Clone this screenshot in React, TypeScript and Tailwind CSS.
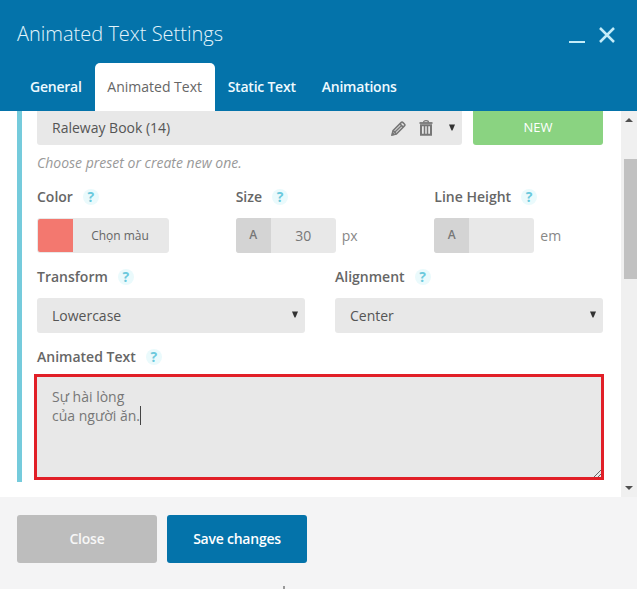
import React from 'react';

const TABS = ['General', 'Animated Text', 'Static Text', 'Animations'];
const ACTIVE_TAB = 'Animated Text';

const FieldLabel: React.FC<{ text: string }> = ({ text }) => (
  <div className="flex items-center h-[26px] gap-[10px]">
    <span className="text-sm font-semibold text-[#666]">{text}</span>
    <span className="w-4 h-4 rounded-full bg-[#eafafc] text-[#6cc9dc] text-sm leading-4 font-bold text-center">?</span>
  </div>
);

const Caret: React.FC = () => (
  <svg width="6" height="7" viewBox="0 0 6 7" className="shrink-0 -mt-[2px]">
    <path d="M0 0.5h6L3.5 6.5h-1z" fill="#333" />
  </svg>
);

const SelectField: React.FC<{ label: string; value: string }> = ({ label, value }) => (
  <div>
    <FieldLabel text={label} />
    <div className="mt-2 h-[35px] rounded-[3px] bg-[#e8e8e8] flex items-center justify-between pl-[15px] pr-[7px]">
      <span className="text-sm text-[#555]">{value}</span>
      <Caret />
    </div>
  </div>
);

interface UnitFieldProps {
  label: string;
  value: string;
  unit: string;
}

const UnitField: React.FC<UnitFieldProps> = ({ label, value, unit }) => (
  <div>
    <FieldLabel text={label} />
    <div className="mt-2 flex items-center">
      <div className="flex w-[100px] h-[35px] rounded-[3px] overflow-hidden bg-[#e8e8e8]">
        <span className="w-[35px] bg-[#d4d4d4] text-[#777] text-xs font-semibold leading-[34px] text-center">A</span>
        <span className="flex-1 text-sm leading-[36px] text-[#777] text-center">{value}</span>
      </div>
      <span className="ml-[6px] text-sm text-[#888]">{unit}</span>
    </div>
  </div>
);

const PencilIcon: React.FC = () => (
  <svg width="15" height="15" viewBox="0 0 14 14" fill="none" stroke="#777">
    <path d="M1 13l.9-4L9.4 1.5q.9-.9 1.8 0l1.3 1.3q.9.9 0 1.8L5 12.1z" strokeWidth="1.5" />
    <path d="M8.3 2.6l3.1 3.1M3.7 10.3l5.7-5.7M2 9l3 3" strokeWidth="1.4" />
    <path d="M1 13l.5-2.1 1.6 1.6z" fill="#777" />
  </svg>
);

const TrashIcon: React.FC = () => (
  <svg width="14" height="16" viewBox="0 0 14 16" fill="none" stroke="#777">
    <path d="M4.5 2.5q0-1.8 2.5-1.8t2.5 1.8" strokeWidth="1.2" />
    <path d="M.5 3h13" strokeWidth="1.8" />
    <path d="M2 5.2h10v9.6H2z" strokeWidth="2" />
    <path d="M5.5 5.5v9M8.5 5.5v9" strokeWidth="1.5" />
  </svg>
);

const Header: React.FC = () => (
  <header className="h-[111px] shrink-0 bg-[#0473aa] flex flex-col justify-between">
    <div className="flex justify-between pl-[17px] pr-[22px]">
      <h1 className="mt-[19px] text-xl leading-[30px] font-light text-[#e3f5fc]">Animated Text Settings</h1>
      <div className="flex items-end gap-[14px] pb-[6px]">
        <span className="w-4 h-[2px] bg-[#c4ecf8]" />
        <svg width="16" height="16" viewBox="0 0 16 16" stroke="#c4ecf8" strokeWidth="2.5">
          <path d="M1 1l14 14M15 1L1 15" />
        </svg>
      </div>
    </div>
    <nav className="flex pl-[17px] h-12">
      {TABS.map(tab => (
        <span
          key={tab}
          className={
            tab === ACTIVE_TAB
              ? 'w-[120px] text-center text-sm leading-[48px] rounded-t-[5px] bg-white text-[#666]'
              : 'px-[13px] text-sm leading-[48px] font-semibold tracking-[-0.23px] text-[#eefaff]'
          }
        >
          {tab}
        </span>
      ))}
    </nav>
  </header>
);

const Scrollbar: React.FC = () => (
  <div className="w-4 shrink-0 bg-[#f0f0f0] flex flex-col items-center">
    <svg width="8" height="4" viewBox="0 0 8 4" className="mt-[7px] shrink-0">
      <path d="M0 4l4-4 4 4z" fill="#505050" />
    </svg>
    <div className="mt-[37px] ml-[2px] w-[13px] h-[120px] bg-[#c1c1c1]" />
    <svg width="8" height="4" viewBox="0 0 8 4" className="mt-auto mb-[7px] shrink-0">
      <path d="M0 0h8L4 4z" fill="#505050" />
    </svg>
  </div>
);

export default function App() {
  return (
    <div className="w-[637px] h-[589px] flex flex-col overflow-hidden bg-white font-['Open_Sans',sans-serif]">
      <Header />

      <div className="flex h-[386px] shrink-0">
        <main className="ml-[17px] w-[604px] h-[371px] border-l-[5px] border-[#75cbdc] pl-[15px] pr-[18px]">
          <div className="flex gap-[11px] h-[34px]">
            <div className="flex-1 rounded-b-[3px] bg-[#e8e8e8] flex items-center pl-[15px] pr-[7px]">
              <span className="flex-1 text-sm text-[#555]">Raleway Book (14)</span>
              <PencilIcon />
              <span className="ml-[13px] mr-[16px]"><TrashIcon /></span>
              <Caret />
            </div>
            <button className="w-[130px] rounded-b-[3px] bg-[#8ad381] text-white text-[13px]">NEW</button>
          </div>
          <p className="mt-[7px] text-sm leading-[22px] italic text-[#999]">Choose preset or create new one.</p>

          <div className="mt-[10px] grid grid-cols-3 gap-x-[30px]">
            <div>
              <FieldLabel text="Color" />
              <div className="mt-2 flex w-[132px] h-[35px] rounded-[3px] overflow-hidden border border-[#e8e8e8] bg-[#e8e8e8]">
                <span className="w-[35px] bg-[#f3786f]" />
                <span className="flex-1 pr-px text-xs leading-[34px] text-[#666] text-center">Chọn màu</span>
              </div>
            </div>
            <UnitField label="Size" value="30" unit="px" />
            <UnitField label="Line Height" value="" unit="em" />
          </div>

          <div className="mt-[11px] grid grid-cols-2 gap-x-[30px]">
            <SelectField label="Transform" value="Lowercase" />
            <SelectField label="Alignment" value="Center" />
          </div>

          <div className="mt-[11px]">
            <FieldLabel text="Animated Text" />
            <div className="mt-1 -ml-[3px] w-[570px] h-[106px] border-[3px] border-[#e11f27] bg-[#e8e8e8] pl-[15px] pt-[10px] flex justify-between">
              <div className="text-sm leading-[19px] text-[#777]">
                <p>Sự hài lòng</p>
                <p className="flex">
                  của người ăn.<span className="w-px h-[19px] bg-[#444]" />
                </p>
              </div>
              <svg width="8" height="8" viewBox="0 0 8 8" className="self-end" stroke="#555" strokeWidth="0.9">
                <path d="M1 8l7-7M5 8l3-3" />
              </svg>
            </div>
          </div>
        </main>
        <Scrollbar />
      </div>

      <footer className="relative flex-1 flex gap-[10px] pl-[17px] pt-[18px] bg-[#f4f4f5]">
        <button className="w-[140px] h-12 rounded-[3px] bg-[#bdbdbd] text-[#f7f7f7] text-sm font-semibold tracking-[-0.23px]">Close</button>
        <button className="w-[140px] h-12 rounded-[3px] bg-[#0473aa] text-white text-sm font-semibold tracking-[-0.23px]">Save changes</button>
        <span className="absolute left-[283px] bottom-0 w-[2px] h-[3px] bg-[#999]" />
      </footer>
    </div>
  );
}
